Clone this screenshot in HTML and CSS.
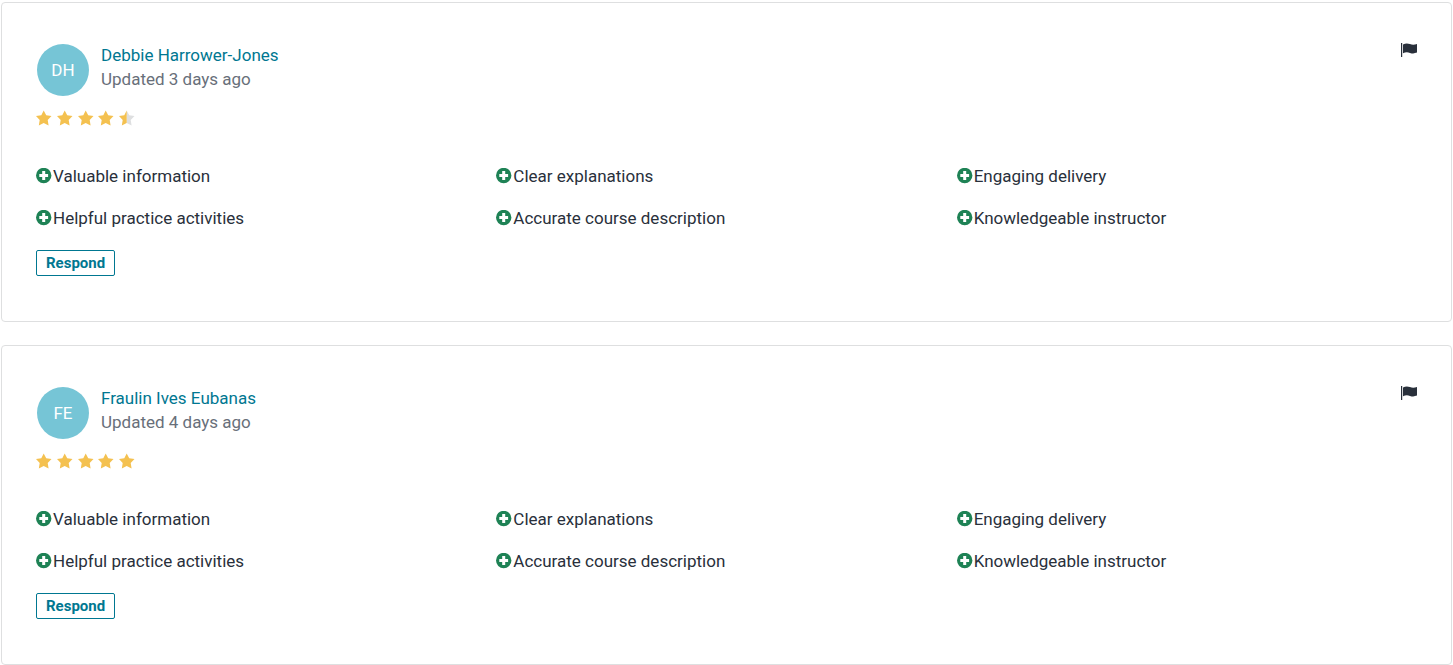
FILE: index.html
```
<!DOCTYPE html>
<html>
<head lang="en">
    <meta charset="UTF-8">
    <title>Course reviews</title>
    <link rel="stylesheet" href="styles.css">
</head>
<body>
    <svg class="sprite" aria-hidden="true">
        <symbol id="star" viewBox="0 0 16 16">
            <path d="M7.700 .4l2.500 4.900 5.300.8-3.800 3.900.9 5.500-4.900-2.500-4.900 2.500.9-5.500L0 6.100l5.300-.8z"/>
        </symbol>
        <symbol id="half" viewBox="0 0 16 16">
            <path class="empty" d="M7.700 .4l2.500 4.900 5.300.8-3.800 3.900.9 5.500-4.900-2.500z"/>
            <path d="M7.700 .4V13l-4.900 2.500.9-5.500L0 6.100l5.300-.8z"/>
        </symbol>
        <symbol id="plus" viewBox="0 0 16 16">
            <circle cx="7.700" cy="7.500" r="7.700"/>
            <path class="cross" d="M7.700 3.100v8.800M3.300 7.500h8.800"/>
        </symbol>
        <symbol id="flag" viewBox="0 0 17 14">
            <path d="M1 0h1.200v14H1z"/>
            <path d="M3 1.500c2.300-1.100 4.500-1.200 6.900-.4 2.600.9 4.600.8 7.100-.2v8.700c-2.500 1-4.500 1.100-7 .3-2.500-.9-4.600-.8-7 .4z"/>
        </symbol>
    </svg>
    <div class="reviews">
        <div class="review">
            <div class="head">
                <div class="avatar">DH</div>
                <div class="user">
                    <a href="#">Debbie Harrower-Jones</a>
                    <p>Updated 3 days ago</p>
                </div>
                <button class="flag" aria-label="Report review"><svg><use href="#flag"/></svg></button>
            </div>
            <div class="stars" role="img" aria-label="4.5 out of 5">
                <svg><use href="#star"/></svg>
                <svg><use href="#star"/></svg>
                <svg><use href="#star"/></svg>
                <svg><use href="#star"/></svg>
                <svg><use href="#half"/></svg>
            </div>
            <ul class="tags">
                <li><svg><use href="#plus"/></svg>Valuable information</li>
                <li><svg><use href="#plus"/></svg>Clear explanations</li>
                <li><svg><use href="#plus"/></svg>Engaging delivery</li>
                <li><svg><use href="#plus"/></svg>Helpful practice activities</li>
                <li><svg><use href="#plus"/></svg>Accurate course description</li>
                <li><svg><use href="#plus"/></svg>Knowledgeable instructor</li>
            </ul>
            <button class="respond">Respond</button>
        </div>
        <div class="review">
            <div class="head">
                <div class="avatar">FE</div>
                <div class="user">
                    <a href="#">Fraulin Ives Eubanas</a>
                    <p>Updated 4 days ago</p>
                </div>
                <button class="flag" aria-label="Report review"><svg><use href="#flag"/></svg></button>
            </div>
            <div class="stars" role="img" aria-label="5 out of 5">
                <svg><use href="#star"/></svg>
                <svg><use href="#star"/></svg>
                <svg><use href="#star"/></svg>
                <svg><use href="#star"/></svg>
                <svg><use href="#star"/></svg>
            </div>
            <ul class="tags">
                <li><svg><use href="#plus"/></svg>Valuable information</li>
                <li><svg><use href="#plus"/></svg>Clear explanations</li>
                <li><svg><use href="#plus"/></svg>Engaging delivery</li>
                <li><svg><use href="#plus"/></svg>Helpful practice activities</li>
                <li><svg><use href="#plus"/></svg>Accurate course description</li>
                <li><svg><use href="#plus"/></svg>Knowledgeable instructor</li>
            </ul>
            <button class="respond">Respond</button>
        </div>
    </div>
</body>
</html>
```
FILE: styles.css
```
*{
    margin: 0;
    padding: 0;
    box-sizing: border-box;
}
body{
    font: 17px/24px Roboto, "Liberation Sans", sans-serif;
    color: #29303b;
    background: #fff;
}
ul{
    list-style: none;
}
a{
    color: #007791;
    text-decoration: none;
}
svg{
    display: block;
    flex: none;
}
button{
    font-family: inherit;
    background: none;
    border: none;
    cursor: pointer;
}
.sprite{
    position: absolute;
    width: 0;
    height: 0;
}
.reviews{
    display: flex;
    flex-direction: column;
    gap: 23px;
    padding: 2px 1px 0;
}
.review{
    padding: 40px 34px 45px;
    border: 1px solid #dedfe0;
    border-radius: 4px;
}
.head{
    display: flex;
    align-items: flex-start;
}
.avatar{
    width: 52px;
    height: 52px;
    margin: 1px 12px 1px 1px;
    border-radius: 50%;
    background: #76c5d6;
    color: #fff;
    line-height: 52px;
    text-align: center;
}
.user{
    flex: 1;
    color: #686f7a;
}
.flag svg{
    width: 17px;
    height: 14px;
    fill: #29303b;
}
.stars{
    display: flex;
    align-items: center;
    justify-content: space-between;
    width: 99px;
    height: 24px;
    margin-top: 9px;
}
.stars svg{
    width: 16px;
    height: 16px;
    fill: #f4c150;
}
.empty{
    fill: #dedfe0;
}
.tags{
    display: grid;
    grid-template-columns: repeat(3, 1fr);
    margin-top: 25px;
}
.tags li{
    display: flex;
    align-items: center;
    gap: 1px;
    height: 42px;
}
.tags svg{
    width: 16px;
    height: 16px;
    fill: #1e8255;
}
.cross{
    stroke: #fff;
    stroke-width: 3;
}
.respond{
    display: block;
    height: 26px;
    margin-top: 11px;
    padding: 0 9px;
    border: 1px solid #007791;
    border-radius: 2px;
    color: #007791;
    font-size: 15px;
    font-weight: bold;
}
```
